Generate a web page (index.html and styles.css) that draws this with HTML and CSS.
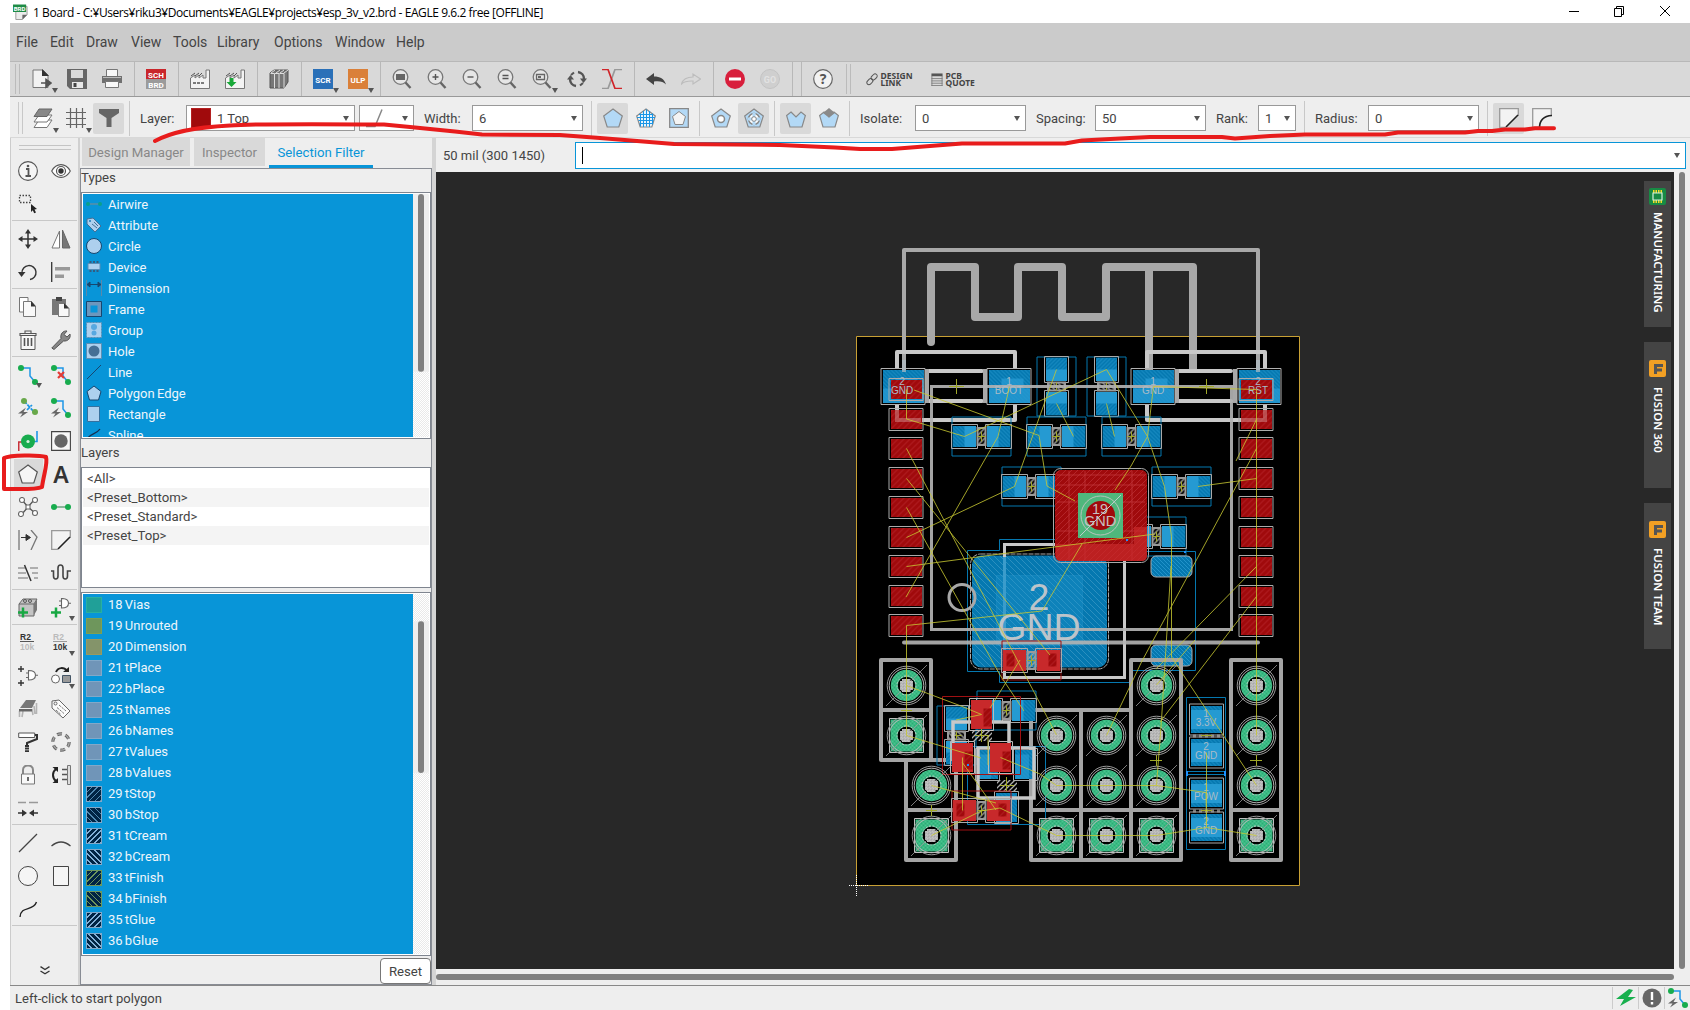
FILE: index.html
```html
<!DOCTYPE html>
<html lang="en">
<head>
<meta charset="utf-8">
<title>1 Board - EAGLE 9.6.2 free</title>
<link rel="stylesheet" href="styles.css">
</head>
<body>
<svg class="defs" width="0" height="0">
<defs>
  <pattern id="hb" width="4" height="4" patternUnits="userSpaceOnUse"><rect width="4" height="4" fill="#0578b0"/><path d="M-1-1l6 6M-1 3l2 2M3-1l2 2" stroke="#2a9bd0" stroke-width=".8"/></pattern>
  <pattern id="hbig" width="6" height="6" patternUnits="userSpaceOnUse"><rect width="6" height="6" fill="#0578b0"/><path d="M-1-1l8 8M-1 5l2 2M5-1l2 2" stroke="#3c9ac6" stroke-width=".7"/></pattern>
  <pattern id="hr" width="6" height="6" patternUnits="userSpaceOnUse"><rect width="6" height="6" fill="#a00a0c"/><path d="M-1 7l8-8M-1 1l2-2M5 7l2-2" stroke="#c03338" stroke-width=".7"/></pattern>
  <pattern id="hg" width="4" height="4" patternUnits="userSpaceOnUse"><rect width="4" height="4" fill="#2cac76"/><path d="M0 4l4-4M0 0l4 4" stroke="#58d09a" stroke-width=".7"/></pattern>
  <pattern id="hw" width="5" height="5" patternUnits="userSpaceOnUse"><path d="M-1 6l7-7M-1 1l2-2M4 6l2-2" stroke="#b0b0b0" stroke-width="1.3"/></pattern>
  <pattern id="noise" width="3" height="3" patternUnits="userSpaceOnUse"><rect width="3" height="3" fill="#c4c4c4"/><path d="M0 0h1v1H0zM2 1h1v1H2z" fill="#8a8a8a"/></pattern>
</defs>
<symbol id="new" viewBox="0 0 20 20"><path d="M1 1h10l5 5v12.500H1z" fill="#f2f2f2" stroke="#777"/><path d="M10 0l7 7h-7z" fill="#333"/><path d="M9 14h7M14 10.500l5 3.500-5 4z" fill="#555" stroke="#555" stroke-width="1.600"/></symbol>
<symbol id="save" viewBox="0 0 20 20"><path d="M0 0h20v20H3l-3-3z" fill="#666"/><path d="M4 1h12v8H4z" fill="#d9d9d9"/><path d="M5 13h11v6H5z" fill="#e8e8e8"/><path d="M6.500 14h3v4h-3z" fill="#444"/></symbol>
<symbol id="print" viewBox="0 0 20 20"><path d="M4.500.5h11V8h-11z" fill="#f8f8f8" stroke="#777"/><path d="M0 7h20v7H0z" fill="#707070"/><path d="M1 8.500h18" stroke="#bbb"/><path d="M3.500 12.500h13v6h-13z" fill="#f8f8f8" stroke="#777"/></symbol>
<symbol id="fab" viewBox="0 0 20 20"><path d="M.5 19.500V9L5 6v3l4-3v3l4-3v3h3V1h3.500v18.500z" fill="#f3f3f3" stroke="#777"/><path d="M1 7l4-3M5 7l4-3M9 7l3-3" stroke="#555"/></symbol>
<symbol id="cam" viewBox="0 0 20 20"><use href="#fab"/><path d="M3 14h12" stroke="#555" stroke-width="1.500" stroke-dasharray="3 1"/></symbol>
<symbol id="camd" viewBox="0 0 20 20"><use href="#fab"/><path d="M4.500 9h4v4h3L6.500 18l-5-5h3z" fill="#18a838"/></symbol>
<symbol id="lib" viewBox="0 0 20 20"><path d="M1 4l4-3h14v12l-4 6H1z" fill="#777" stroke="#555"/><path d="M1.500 4.500h4V19M6 4.500h4V19M10.500 4.500H15V19" fill="none" stroke="#ddd"/><path d="M2 4l4-3M7 4l4-3M11 4l4-3M15 4l4-3" stroke="#ddd"/></symbol>
<symbol id="z" viewBox="0 0 20 20"><circle cx="8.500" cy="8" r="7.300" fill="#e6e6e6" stroke="#777" stroke-width="1.300"/><path d="M13.500 13.500l5 5.500" stroke="#666" stroke-width="2.400"/></symbol>
<symbol id="zf" viewBox="0 0 20 20"><use href="#z"/><path d="M4 5h9v6H4z" fill="#666"/></symbol>
<symbol id="zi" viewBox="0 0 20 20"><use href="#z"/><path d="M5.500 8h6M8.500 5v6" stroke="#555" stroke-width="1.400"/></symbol>
<symbol id="zo" viewBox="0 0 20 20"><use href="#z"/><path d="M5.500 8h6" stroke="#555" stroke-width="1.400"/></symbol>
<symbol id="ze" viewBox="0 0 20 20"><use href="#z"/><path d="M5.500 6.500h6M5.500 9.500h6" stroke="#555" stroke-width="1.300"/></symbol>
<symbol id="zs" viewBox="0 0 20 20"><use href="#z"/><path d="M4.500 5.500h8v5h-8z" fill="none" stroke="#666" stroke-width="1.300"/><path d="M6 7h3v2H6z" fill="#666"/></symbol>
<symbol id="refresh" viewBox="0 0 20 20"><path d="M11 3a7 7 0 0 1 6 7M9 17a7 7 0 0 1-6-7" fill="none" stroke="#555" stroke-width="2.400"/><path d="M13 9.500h7L16.500 14zM0 10.500h7L3.500 6z" fill="#555"/><path d="M7 3.500L4 6M13 16.500l3-2.500" stroke="#555" stroke-width="2"/></symbol>
<symbol id="ratx" viewBox="0 0 20 20"><path d="M0 19.500h6L13 .5h7" fill="none" stroke="#999" stroke-width="1.700"/><path d="M0 .5h6l7 19h7" fill="none" stroke="#d0252a" stroke-width="1.700"/></symbol>
<symbol id="undo" viewBox="0 0 20 20"><path d="M0 10l8-6v3.500c6 0 10 2 12 8-3-3-6-3.500-12-3V16z" fill="#444"/></symbol>
<symbol id="redo" viewBox="0 0 20 20"><path d="M19.500 10L12 5v3C6 8 2 9.500.5 15c3-3 6-3.200 11.500-3v3z" fill="none" stroke="#bdbdbd" stroke-width="1.200"/></symbol>
<symbol id="stop" viewBox="0 0 20 20"><circle cx="10" cy="10" r="10" fill="#d81f3c"/><path d="M4 10h12" stroke="#fff" stroke-width="3"/></symbol>
<symbol id="link" viewBox="0 0 14 14"><g fill="none" stroke="#555" stroke-width="1.200"><rect x="5.500" y="1.500" width="8" height="5" rx="2.500" transform="rotate(-45 9.500 4)"/><rect x=".5" y="7" width="8" height="5" rx="2.500" transform="rotate(-45 4.500 9.500)"/></g></symbol>
<symbol id="quote" viewBox="0 0 12 14"><path d="M0 .5h12v3H0z" fill="#555"/><path d="M0 6h12M0 8.500h12M0 11h12M0 13.500h12M.5 3v11M11.500 3v11" stroke="#777" stroke-width=".9"/></symbol>
<symbol id="layers" viewBox="0 0 20 20"><path d="M6 12h13l-5 7.500H1z" fill="#fff" stroke="#777"/><path d="M6 7h13l-5 7H1z" fill="#fff" stroke="#777"/><path d="M6 1h13l-5 7.500H1z" fill="#888" stroke="#666"/></symbol>
<symbol id="grid" viewBox="0 0 20 20"><path d="M4.500 0v20M10.500 0v20M16.500 0v20M0 4.500h20M0 10.500h20M0 16.500h20" stroke="#666" stroke-width="1.200"/></symbol>
<symbol id="filter" viewBox="0 0 20 20"><path d="M0 1h20v4l-7.500 5v9h-5v-9L0 5z" fill="#666"/></symbol>
<symbol id="penta" viewBox="0 0 20 20"><path d="M10 1l9.300 7-3.500 11H4.200L.7 8z" stroke-width="1.200"/></symbol>
<symbol id="p1" viewBox="0 0 20 20"><use href="#penta" fill="#b3d9f6" stroke="#888"/></symbol>
<symbol id="p2" viewBox="0 0 20 20"><use href="#penta" fill="#fff" stroke="#888"/><path d="M4.500 5.500v13M7.500 3v16M10.500 1.500v17M13.500 3v16M16.500 5.500v11M3 6.500h14M1 9.500h18M2.500 12.500h15M3.500 15.500h13" stroke="#1a96e6" stroke-width="1.200"/></symbol>
<symbol id="p3" viewBox="0 0 20 20"><path d="M.7.700h18.600v18.600H.7z" fill="#b3d9f6" stroke="#888" stroke-width="1.300"/><path d="M10 3.500l6.500 5-2.500 8H6l-2.500-8z" fill="#f4f4f4" stroke="#888"/></symbol>
<symbol id="p4" viewBox="0 0 20 20"><use href="#p1"/><circle cx="10" cy="11" r="3.500" fill="#fff" stroke="#888" stroke-width="1.500"/></symbol>
<symbol id="p5" viewBox="0 0 20 20"><use href="#p1"/><circle cx="10" cy="11" r="5.500" fill="#fff" stroke="#888" stroke-width="1.500"/><path d="M10 5v12M4 11h12" stroke="#b3d9f6" stroke-width="3"/><circle cx="10" cy="11" r="2.300" fill="#fff" stroke="#888"/></symbol>
<symbol id="p6" viewBox="0 0 20 20"><path d="M5 4l5 5 5-5 4.400 3.500L16 19H4L.6 7.500z" fill="#b3d9f6" stroke="#888" stroke-width="1.200"/></symbol>
<symbol id="p7" viewBox="0 0 20 20"><use href="#p6"/><path d="M10 0l6 5-6 4.500L4 5z" fill="#8a8a8a"/></symbol>
<symbol id="miter" viewBox="0 0 20 20"><path d="M.7 19.500V.7h18.600v7L7 19.300z" fill="#f3f3f3"/><path d="M7 19.300H.7V.7h18.600v7" fill="none" stroke="#999" stroke-width="1.300"/><path d="M7 19L19 7" stroke="#222" stroke-width="1.600"/></symbol>
<symbol id="round" viewBox="0 0 20 20"><path d="M.7 19.500V.7h18.600v7c-8 .5-11.500 4-12 11.600z" fill="#f3f3f3"/><path d="M7 19.300H.7V.7h18.600v7" fill="none" stroke="#999" stroke-width="1.300"/><path d="M7.500 20C7.500 12 11 8 20 7.500" fill="none" stroke="#222" stroke-width="1.600"/></symbol>
<symbol id="info" viewBox="0 0 20 20"><circle cx="10" cy="10" r="9.400" fill="#f5f5f5" stroke="#555" stroke-width="1.100"/><path d="M8 8h2.500v7M7.500 15h5.500" fill="none" stroke="#555" stroke-width="1.800"/><circle cx="10" cy="5" r="1.300" fill="#555"/></symbol>
<symbol id="eye" viewBox="0 0 20 20"><path d="M.7 10c4.500-8.500 14-8.500 18.600 0-4.500 8.500-14 8.500-18.600 0z" fill="#fff" stroke="#555" stroke-width="1.100"/><circle cx="10" cy="10" r="4.500" fill="none" stroke="#555" stroke-width="1.200"/><circle cx="10" cy="10" r="2.700" fill="#333"/></symbol>
<symbol id="sel" viewBox="0 0 20 20"><path d="M1.500 1.500h11v7h-11z" fill="none" stroke="#444" stroke-width="1.300" stroke-dasharray="1.500 1.500"/><path d="M13 10l6 5-2.500.5 1.500 3-1.800.8-1.400-3-1.800 1.700z" fill="#222"/></symbol>
<symbol id="move" viewBox="0 0 20 20"><path d="M10 2v16M2 10h16" stroke="#333" stroke-width="1.500"/><path d="M10 0l3 4.500H7zM10 20l3-4.500H7zM0 10l4.500-3v6zM20 10l-4.500-3v6z" fill="#333"/></symbol>
<symbol id="mirror" viewBox="0 0 20 20"><path d="M8.500 2v17H1z" fill="#fff" stroke="#777"/><path d="M11.500 1L19 19h-7.500z" fill="#777" stroke="#666"/></symbol>
<symbol id="rot" viewBox="0 0 20 20"><path d="M4 11a7 7 0 1 1 8 6.500" fill="none" stroke="#333" stroke-width="1.400"/><path d="M0 10h7.500L3.500 15z" fill="#333"/></symbol>
<symbol id="align" viewBox="0 0 20 20"><path d="M.7 0v20" stroke="#333" stroke-width="1.300"/><path d="M4 5h15v3.500H4zM4 12.500h9V16H4z" fill="#999"/></symbol>
<symbol id="copy" viewBox="0 0 20 20"><path d="M1.500.5H10V15H1.500z" fill="#fff" stroke="#777"/><path d="M5.500 4.500h8l4 5v10h-12z" fill="#f8f8f8" stroke="#777"/><path d="M13 4l5 5.500h-5z" fill="#333"/></symbol>
<symbol id="paste" viewBox="0 0 20 20"><path d="M1 2h14v16H1z" fill="#777"/><path d="M5 0h6v4H5z" fill="#444"/><path d="M7.500 6.500h6l4.500 5v8H7.500z" fill="#f8f8f8" stroke="#777"/><path d="M13 6l5 5.500h-5z" fill="#333"/></symbol>
<symbol id="trash" viewBox="0 0 20 20"><path d="M3 5.500h14v14H3z" fill="#f8f8f8" stroke="#555"/><path d="M2 3.500h16v2H2zM7 3V1h6v2" fill="none" stroke="#555" stroke-width="1.100"/><path d="M6.500 8v8M10 8v8M13.500 8v8" stroke="#555" stroke-width="1.600"/></symbol>
<symbol id="wrench" viewBox="0 0 20 20"><path d="M.8 18L10 8.500C9 4 12 .5 16 1l-3 3.500L16 7l3-3c1 4-2 7.500-6.500 7L3 19.500z" fill="#888" stroke="#555"/></symbol>
<symbol id="route" viewBox="0 0 20 20"><path d="M3 3h9v8l5 6" fill="none" stroke="#1e96e6" stroke-width="1.500"/><circle cx="3" cy="3" r="3" fill="#18ac4e"/><circle cx="17" cy="17" r="3" fill="#18ac4e"/></symbol>
<symbol id="rip" viewBox="0 0 20 20"><use href="#route"/><path d="M7 7l6 6M13 7l-6 6" stroke="#e43b35" stroke-width="2.200"/></symbol>
<symbol id="boltg" viewBox="0 0 20 20"><path d="M8 9.500l-8 6h4.500L2 19.500l8-5.500H5.500z" fill="#666"/></symbol>
<symbol id="fan" viewBox="0 0 20 20"><path d="M6 3l11 12M9 12l5-5" stroke="#1e96e6" stroke-width="1.700" stroke-dasharray="4 1"/><circle cx="6" cy="3" r="3" fill="#68a84a"/><circle cx="17" cy="14" r="3" fill="#68a84a"/><use href="#boltg"/></symbol>
<symbol id="auto" viewBox="0 0 20 20"><use href="#route"/><use href="#boltg"/></symbol>
<symbol id="via" viewBox="0 0 20 20"><path d="M.7 20v-9h9" fill="none" stroke="#c8323a" stroke-width="1.600"/><path d="M10 10.500h9V0" fill="none" stroke="#1e96e6" stroke-width="1.600"/><circle cx="10" cy="10.500" r="7" fill="#18ac4e"/><circle cx="10" cy="10.500" r="1.600" fill="#d5f0de"/></symbol>
<symbol id="hole" viewBox="0 0 20 20"><path d="M.6.600h18.800v18.800H.6z" fill="#f8f8f8" stroke="#444" stroke-width="1.100"/><circle cx="10" cy="10" r="6.700" fill="#666"/></symbol>
<symbol id="poly" viewBox="0 0 20 20"><use href="#penta" fill="#f5f5f5" stroke="#555"/></symbol>
<symbol id="net" viewBox="0 0 20 20"><path d="M4 3l6 7 6-7M4 17l6-7 7 6" fill="none" stroke="#555" stroke-width="1.300"/><g fill="#fff" stroke="#666" stroke-width="1.100"><circle cx="4" cy="3" r="2.500"/><circle cx="17" cy="3" r="2.500"/><circle cx="3" cy="17" r="2.500"/><circle cx="17" cy="16" r="2.500"/><path d="M8 8h4v4H8z"/></g></symbol>
<symbol id="wire" viewBox="0 0 20 20"><path d="M3 10h14" stroke="#8ab59a" stroke-width="2"/><circle cx="3" cy="10" r="3" fill="#18ac4e"/><circle cx="17" cy="10" r="3" fill="#18ac4e"/></symbol>
<symbol id="ext" viewBox="0 0 20 20"><path d="M1 0v20M13 0l6 7-6 13" fill="none" stroke="#777" stroke-width="1.300"/><path d="M3 7.500h6M8 4.500l4.500 3-4.500 3z" fill="#333" stroke="#333"/></symbol>
<symbol id="split" viewBox="0 0 20 20"><path d="M0 5h7M12 5h8M0 10h8M14 10h6M0 15h10M16 15h4" stroke="#999" stroke-width="1.500"/><path d="M6.500 2L13 18" stroke="#333" stroke-width="1.500"/></symbol>
<symbol id="meander" viewBox="0 0 20 20"><path d="M0 8h2.500v5c0 4 4.500 4 4.500 0V5c0-4 5-4 5 0v8c0 4 4.500 4 4.500 0V8H20" fill="none" stroke="#444" stroke-width="1.600"/></symbol>
<symbol id="add" viewBox="0 0 20 20"><path d="M1 6l4-5h14l-3 5v12H1z" fill="#c4c4c4" stroke="#666"/><path d="M16 6l3-5v11l-3 5z" fill="#777"/><path d="M1 6h15" stroke="#666"/><g fill="none" stroke="#555"><circle cx="7" cy="3" r="1.500"/><circle cx="12" cy="3" r="1.500"/></g><path d="M5 9.500v10M0 14.500h10" stroke="#18a843" stroke-width="2.500"/></symbol>
<symbol id="gate" viewBox="0 0 20 20"><path d="M10.500 1.500V11c5 0 7-2 7-4.800s-2-4.700-7-4.700zM8 4h2.500M8 8.500h2.500M17.500 6.200H20" fill="#fff" stroke="#666" stroke-width="1.100"/></symbol>
<symbol id="addg" viewBox="0 0 20 20"><use href="#gate" y="-1"/><path d="M5 9.500v10M0 14.500h10" stroke="#18a843" stroke-width="2.500"/></symbol>
<symbol id="inv" viewBox="0 0 20 20"><use href="#gate" y="3"/><path d="M0 3h6M3 0v6M0 17h6M3 14v6" stroke="#333" stroke-width="1.400"/></symbol>
<symbol id="repl" viewBox="0 0 20 20"><path d="M5 6c2-5 8-5 11-1" fill="none" stroke="#222" stroke-width="2"/><path d="M12 6h6V1z" fill="#222"/><circle cx="4.500" cy="13" r="4" fill="#fff" stroke="#666"/><path d="M11.500 9.500h8v7h-8z" fill="#999" stroke="#456"/></symbol>
<symbol id="chip" viewBox="0 0 20 20"><path d="M1.500 12v6M5 12l-1 6M14 10l1 6M16 7l1 8M18.500 4v11" stroke="#b4b4b4" stroke-width="1.600"/><path d="M2 9l6-8h10l-4 8z" fill="#777"/><path d="M1 10h13v2.500H1z" fill="#666"/></symbol>
<symbol id="tag" viewBox="0 0 20 20"><path d="M1 2l7-1 11 11-7 7L1 9z" fill="#fbfbfb" stroke="#666"/><circle cx="4.500" cy="4.500" r="1.500" fill="none" stroke="#666"/><path d="M8 6l7 6M6 8.500l7 6M5 11l5 4.500" stroke="#777" stroke-dasharray="2.500 1"/></symbol>
<symbol id="paint" viewBox="0 0 20 20"><path d="M.7 1h16v4.500H.7z" fill="#fff" stroke="#555"/><path d="M17 3h2v4L9 11v3" fill="none" stroke="#333" stroke-width="2"/><path d="M9 13v7" stroke="#333" stroke-width="4" stroke-dasharray="2 .6"/></symbol>
<symbol id="ring" viewBox="0 0 20 20"><circle cx="10" cy="10" r="8.200" fill="none" stroke="#666" stroke-width="3.200" stroke-dasharray="5 3.600"/><circle cx="10" cy="10" r="8.200" fill="none" stroke="#aaa" stroke-width="1.300" stroke-dasharray="5 3.600"/></symbol>
<symbol id="lock" viewBox="0 0 20 20"><path d="M5 9V5c0-6 10-6 10 0v4" fill="none" stroke="#888" stroke-width="2"/><path d="M3.500 9h13v10h-13z" fill="#f8f8f8" stroke="#777"/><path d="M10 12v4" stroke="#444" stroke-width="1.600"/></symbol>
<symbol id="pinsw" viewBox="0 0 20 20"><path d="M5 4c-4 3-4 9 0 12" fill="none" stroke="#222" stroke-width="2"/><path d="M1.500 2H7v5zM1.500 18H7v-5z" fill="#222"/><path d="M11 4.500h6M11 9.500h6M11 14.500h6" stroke="#555" stroke-width="1.400"/><path d="M16.500.5h3v19h-3z" fill="#ddd" stroke="#777"/></symbol>
<symbol id="slice" viewBox="0 0 20 20"><path d="M0 4.500h8M11 4.500h9" stroke="#999" stroke-width="1.700"/><path d="M0 15h6M14 15h6" stroke="#333" stroke-width="1.600"/><path d="M4 11.500L9 15l-5 3.500zM16 11.500L11 15l5 3.500z" fill="#333"/></symbol>
<symbol id="line" viewBox="0 0 20 20"><path d="M1 19L19 1" stroke="#444" stroke-width="1.200"/></symbol>
<symbol id="arc" viewBox="0 0 20 20"><path d="M.5 13c6-5 13-5 19 0" fill="none" stroke="#444" stroke-width="1.300"/></symbol>
<symbol id="circ" viewBox="0 0 20 20"><circle cx="10" cy="10" r="9.500" fill="#f5f5f5" stroke="#444"/></symbol>
<symbol id="rect" viewBox="0 0 20 20"><path d="M2.500.5h15v19h-15z" fill="#f5f5f5" stroke="#444"/></symbol>
<symbol id="spl" viewBox="0 0 20 20"><path d="M2 18c1-12 13-5 16.500-15" fill="none" stroke="#222" stroke-width="1.400"/></symbol>
<symbol id="resistor" overflow="visible"><path d="M-29.500-19.500h59v39h-59z" fill="none" stroke="#0578b0"/><path d="M-30-12h26v24h-26zM4-12h26v24H4z" fill="none" stroke="#aaa"/><path d="M-4-8.500h8v17h-8z" fill="url(#hw)" stroke="#999" stroke-width="2"/><path d="M-28.500-10.500h23v21h-23zM5.500-10.500h23v21h-23z" fill="url(#hb)"/><path d="M-17-10.500h11.500v21H-17zM5.500-10.500H17v21H5.500z" fill="#259ad2"/><path d="M-4 0h8M0-5V5" stroke="#a0a828"/></symbol>
<symbol id="resred" overflow="visible"><path d="M-29.500-19.500h59v39h-59z" fill="none" stroke="#9c1012"/><path d="M-30-12h26v24h-26zM4-12h26v24H4z" fill="none" stroke="#aaa"/><path d="M-4-8.500h8v17h-8z" fill="url(#hw)" stroke="#999" stroke-width="2"/><path d="M-28.500-10.500h23v21h-23zM5.500-10.500h23v21h-23z" fill="#c8292b"/><path d="M-25-7h8v13h-8zM17-7h8v13h-8z" fill="url(#hr)"/><path d="M-4 0h8M0-5V5" stroke="#a0a828"/></symbol>
<symbol id="rpad" overflow="visible"><path d="M-17.500-11h34v22h-34z" fill="none" stroke="#aaa"/><path d="M-15.500-9.500h31v19h-31z" fill="url(#hr)"/></symbol>
<symbol id="bpad" overflow="visible"><path d="M-22.500-18h44v36h-44z" fill="none" stroke="#b0b0b0"/><path d="M-20.500-16.500h41v33h-41z" fill="url(#hb)"/><path d="M-20.500 2h41v14.500h-41zM-8-8H14V4H-8z" fill="#259ad2" opacity=".8"/></symbol>
<symbol id="thring" overflow="visible"><circle r="17.300" fill="none" stroke="#b8b8b8"/><circle r="19.300" fill="none" stroke="#999"/><circle r="9.500" fill="none" stroke="#ccc" stroke-dasharray="2 1.500"/><path d="M-20.500 20.500L20.500-20.500" stroke="#999" stroke-width=".8"/><path d="M-4.500-6.500H4v2h2.500v9H4v2h-8.500v-2h-2v-9h2z" fill="url(#noise)"/></symbol>
<symbol id="th" overflow="visible"><circle r="12.200" fill="none" stroke="url(#hg)" stroke-width="7"/><use href="#thring"/></symbol>
<symbol id="sq" overflow="visible"><path d="M-17-17h34v34h-34z" fill="#000" stroke="#c0c0c0"/><path d="M-16-16h32v32h-32z" fill="url(#hg)"/><circle r="9" fill="#000"/><use href="#thring"/></symbol>
<symbol id="sotb" overflow="visible"><path d="M-12-16h24v32h-24z" fill="none" stroke="#aaa"/><path d="M-10.500-14.500h21v29h-21z" fill="url(#hb)"/><path d="M-10.500-10h14v24.500h-14z" fill="#259ad2" opacity=".7"/></symbol>
<symbol id="sotr" overflow="visible"><path d="M-12-16h24v32h-24z" fill="none" stroke="#bbb"/><path d="M-10.500-14.500h21v29h-21z" fill="#c8292b"/><path d="M2-6h8v18H2z" fill="url(#hr)"/></symbol>
<symbol id="jpad" overflow="visible"><path d="M-17-15.500h34v31h-34z" fill="none" stroke="#aaa"/><path d="M-15.500-13.500h31v27h-31z" fill="#259ad2"/><path d="M-15.500-13.500h31v4h-31zM-15.500 9.500h31v4h-31z" fill="url(#hb)"/></symbol>
</svg>

<div class="window">
  <header class="title">
    <svg class="appicon" viewBox="0 0 16 18"><path d="M3 3h12v9l-5 5H3z" fill="#ececec" stroke="#999"/><path d="M10 17v-5h5z" fill="#666"/><path d="M0 1h14v8H0z" fill="#1e8c46"/><text x="7" y="7.500" class="ib brd">BRD</text></svg>
    <span>1 Board - C:¥Users¥riku3¥Documents¥EAGLE¥projects¥esp_3v_v2.brd - EAGLE 9.6.2 free [OFFLINE]</span>
    <svg class="winbtns" width="102" height="12" viewBox="0 0 102 12" fill="none" stroke="#000"><path d="M0 6.500h10M45.500 3.500h7v8h-7zM47.500 3V1.500h7v8H53M91 1l10 10M101 1L91 11"/></svg>
  </header>
  <nav class="menu"><span class="m1">File</span><span class="m2">Edit</span><span class="m3">Draw</span><span class="m4">View</span><span class="m5">Tools</span><span class="m6">Library</span><span class="m7">Options</span><span class="m8">Window</span><span>Help</span></nav>
  <div class="bar">
    <i class="grip"></i>
    <b class="t dd"><svg><use href="#new"/></svg></b><b class="t"><svg><use href="#save"/></svg></b><b class="t"><svg><use href="#print"/></svg></b><i class="s"></i>
    <b class="t"><svg viewBox="0 0 20 20"><path d="M0 0h20v10H0z" fill="#c9262b"/><path d="M0 10h20v10H0z" fill="#9b9b9b"/><text x="10" y="8.500" class="ib">SCH</text><text x="10" y="18.500" class="ib">BRD</text></svg></b><i class="s"></i>
    <b class="t"><svg><use href="#cam"/></svg></b><b class="t"><svg><use href="#camd"/></svg></b><i class="s"></i>
    <b class="t"><svg><use href="#lib"/></svg></b><i class="s"></i>
    <b class="t dd"><svg viewBox="0 0 20 20"><path d="M0 0h20v20H0z" fill="#2a70b8"/><text x="10" y="13.500" class="ib">SCR</text></svg></b><b class="t dd"><svg viewBox="0 0 20 20"><path d="M0 0h20v20H0z" fill="#da8039"/><text x="10" y="13.500" class="ib">ULP</text></svg></b><i class="s"></i>
    <b class="t"><svg><use href="#zf"/></svg></b><b class="t"><svg><use href="#zi"/></svg></b><b class="t"><svg><use href="#zo"/></svg></b><b class="t"><svg><use href="#ze"/></svg></b><b class="t dd"><svg><use href="#zs"/></svg></b><b class="t"><svg><use href="#refresh"/></svg></b><b class="t"><svg><use href="#ratx"/></svg></b><i class="s"></i>
    <b class="t"><svg><use href="#undo"/></svg></b><b class="t"><svg><use href="#redo"/></svg></b><i class="s"></i>
    <b class="t"><svg><use href="#stop"/></svg></b><b class="t"><svg viewBox="0 0 20 20"><circle cx="10" cy="10" r="9.500" fill="#cfcfcf" stroke="#c3c3c3"/><text x="10" y="13.500" class="ib go">GO</text></svg></b><i class="s"></i><i class="s"></i>
    <b class="t"><svg viewBox="0 0 20 20"><circle cx="10" cy="10" r="9.300" fill="#f2f2f2" stroke="#666" stroke-width="1.200"/><text x="10" y="15" class="q">?</text></svg></b><i class="grip g2"></i>
    <span class="act"><svg width="12" height="13"><use href="#link"/></svg><span>DESIGN<br>LINK</span></span>
    <span class="act a2"><svg width="12" height="13"><use href="#quote"/></svg><span>PCB<br>QUOTE</span></span>
  </div>
  <div class="opts">
    <i class="grip"></i>
    <b class="o dd"><svg><use href="#layers"/></svg></b><b class="o dd"><svg><use href="#grid"/></svg></b><b class="o on"><svg><use href="#filter"/></svg></b><i class="s"></i>
    <label class="w51">Layer:</label><div class="combo c168"><i class="sw"></i>1 Top</div><div class="combo c55"><svg width="24" height="20"><path d="M0 18.500h9L16 1.500" fill="none" stroke="#888" stroke-width="1.500"/></svg></div>
    <label class="w54">Width:</label><div class="combo">6</div><i class="s"></i>
    <b class="o on"><svg><use href="#p1"/></svg></b><b class="o"><svg><use href="#p2"/></svg></b><b class="o"><svg><use href="#p3"/></svg></b><i class="s"></i>
    <b class="o"><svg><use href="#p4"/></svg></b><b class="o on"><svg><use href="#p5"/></svg></b><i class="s"></i>
    <b class="o on"><svg><use href="#p6"/></svg></b><b class="o"><svg><use href="#p7"/></svg></b><i class="s"></i>
    <label class="w61">Isolate:</label><div class="combo">0</div><label class="w65">Spacing:</label><div class="combo">50</div><label class="w48">Rank:</label><div class="combo c38">1</div><i class="s"></i>
    <label class="w59">Radius:</label><div class="combo">0</div><i class="s"></i>
    <b class="o on"><svg><use href="#miter"/></svg></b><b class="o"><svg><use href="#round"/></svg></b>
  </div>
  <main>
    <aside class="palette">
      <i class="hgrip"></i>
      <b><svg><use href="#info"/></svg></b><b><svg><use href="#eye"/></svg></b><b><svg><use href="#sel"/></svg></b><b></b><hr>
      <b><svg><use href="#move"/></svg></b><b><svg><use href="#mirror"/></svg></b><b><svg><use href="#rot"/></svg></b><b><svg><use href="#align"/></svg></b><hr>
      <b><svg><use href="#copy"/></svg></b><b><svg><use href="#paste"/></svg></b><b><svg><use href="#trash"/></svg></b><b><svg><use href="#wrench"/></svg></b><hr>
      <b class="dd"><svg><use href="#route"/></svg></b><b><svg><use href="#rip"/></svg></b><b><svg><use href="#fan"/></svg></b><b><svg><use href="#auto"/></svg></b><b><svg><use href="#via"/></svg></b><b><svg><use href="#hole"/></svg></b>
      <b class="on"><svg><use href="#poly"/></svg></b><b><svg viewBox="0 0 20 20"><text x="10" y="18.500" class="bigA">A</text></svg></b><b><svg><use href="#net"/></svg></b><b><svg><use href="#wire"/></svg></b><b><svg><use href="#ext"/></svg></b><b><svg><use href="#miter"/></svg></b><b><svg><use href="#split"/></svg></b><b><svg><use href="#meander"/></svg></b><hr>
      <b><svg><use href="#add"/></svg></b><b class="dd"><svg><use href="#addg"/></svg></b><hr>
      <b><svg viewBox="0 0 20 20"><text x="2" y="6.500" class="rt">R2</text><path d="M2 8.500h14" stroke="#555"/><text x="2" y="17" class="rt dim">10k</text></svg></b><b class="dd"><svg viewBox="0 0 20 20"><text x="2" y="6.500" class="rt dim">R2</text><path d="M2 8.500h14" stroke="#999"/><text x="2" y="17" class="rt">10k</text></svg></b><b><svg><use href="#inv"/></svg></b><b class="dd"><svg><use href="#repl"/></svg></b><b><svg><use href="#chip"/></svg></b><b><svg><use href="#tag"/></svg></b><b><svg><use href="#paint"/></svg></b><b><svg><use href="#ring"/></svg></b><b><svg><use href="#lock"/></svg></b><b><svg><use href="#pinsw"/></svg></b><b><svg><use href="#slice"/></svg></b><b></b><hr>
      <b><svg><use href="#line"/></svg></b><b><svg><use href="#arc"/></svg></b><b><svg><use href="#circ"/></svg></b><b><svg><use href="#rect"/></svg></b><b><svg><use href="#spl"/></svg></b><b></b><hr>
      <svg class="more" width="10" height="9" fill="none" stroke="#333" stroke-width="1.400"><path d="M.5.700L5 3.500 9.500.700M.5 5L5 7.800 9.500 5"/></svg>
    </aside>
    <section class="panel">
      <div class="tabs"><span class="tab1">Design Manager</span><span class="tab2">Inspector</span><span class="tab3">Selection Filter</span></div>
      <div class="box">
        <h4 class="h1">Types</h4>
        <div class="list l1"><ul class="blue">
          <li><svg viewBox="0 0 16 16"><path d="M2 8h12" stroke="#5b8fa5" stroke-width="1.500"/><circle cx="2" cy="8" r="2" fill="#0aa08c"/><circle cx="14" cy="8" r="2" fill="#0aa08c"/></svg>Airwire</li>
          <li><svg viewBox="0 0 16 16"><path d="M1 2l6-1 8 8-6 6-8-8z" fill="#add0ee" stroke="#456f95"/><circle cx="4" cy="4" r="1" fill="#1879b8"/><path d="M6 7l5 4M8 5l4 4" stroke="#456f95"/></svg>Attribute</li>
          <li><svg viewBox="0 0 16 16"><circle cx="8" cy="8" r="7.500" fill="#add0ee" stroke="#17466f"/></svg>Circle</li>
          <li><svg viewBox="0 0 16 16"><path d="M4.500 2v11M8 2v11M11.500 2v11" stroke="#345c80" stroke-width="2"/><path d="M2 4.500h12v6H2z" fill="#add0ee" stroke="#588eb8"/></svg>Device</li>
          <li><svg viewBox="0 0 16 16"><path d="M.5 0v16M15.500 0v16" stroke="#5a88aa"/><path d="M2 4.500h12M1 4.500l3-2.500v5zM15 4.500L12 2v5z" fill="#17466f" stroke="#17466f"/></svg>Dimension</li>
          <li><svg viewBox="0 0 16 16"><path d="M2.500 2.500h11v11h-11z" fill="none" stroke="#6d97bd" stroke-width="4"/><path d="M.5.500h15v15H.5z" fill="none" stroke="#17466f"/></svg>Frame</li>
          <li><svg viewBox="0 0 16 16"><path d="M.5.500h15v15H.5z" fill="#add0ee" stroke="#5b8fb5" stroke-dasharray="2 1"/><circle cx="8" cy="5" r="3" fill="#58a8e0"/><circle cx="8" cy="11" r="2.500" fill="#58a8e0"/></svg>Group</li>
          <li><svg viewBox="0 0 16 16"><path d="M.5.500h15v15H.5z" fill="#add0ee" stroke="#5b8fb5"/><circle cx="8" cy="8" r="5.500" fill="#456f95"/></svg>Hole</li>
          <li><svg viewBox="0 0 16 16"><path d="M1 15L15 1" stroke="#17466f"/></svg>Line</li>
          <li><svg viewBox="0 0 16 16"><path d="M8 1l7 5.500-2.500 8.500h-9L1 6.500z" fill="#add0ee" stroke="#17466f"/></svg>Polygon Edge</li>
          <li><svg viewBox="0 0 16 16"><path d="M1.500.5h12v15h-12z" fill="#add0ee" stroke="#35719f"/></svg>Rectangle</li>
          <li><svg viewBox="0 0 16 16"><path d="M1 13c2-7 9-5 13-11" fill="none" stroke="#17304f" stroke-width="1.300"/></svg>Spline</li>
        </ul><div class="sb"><i class="th1"></i></div></div>
        <h4 class="h2">Layers</h4>
        <div class="list l2"><ul><li>&lt;All&gt;</li><li>&lt;Preset_Bottom&gt;</li><li>&lt;Preset_Standard&gt;</li><li>&lt;Preset_Top&gt;</li></ul></div>
        <div class="list l3"><ul class="blue">
          <li><i class="c via"></i>18 Vias</li><li><i class="c unr"></i>19 Unrouted</li><li><i class="c dim"></i>20 Dimension</li><li><i class="c"></i>21 tPlace</li><li><i class="c"></i>22 bPlace</li><li><i class="c"></i>25 tNames</li><li><i class="c"></i>26 bNames</li><li><i class="c"></i>27 tValues</li><li><i class="c"></i>28 bValues</li><li><i class="c ht"></i>29 tStop</li><li><i class="c hbk"></i>30 bStop</li><li><i class="c ht wide"></i>31 tCream</li><li><i class="c hbk wide"></i>32 bCream</li><li><i class="c ht grn"></i>33 tFinish</li><li><i class="c hbk grn"></i>34 bFinish</li><li><i class="c ht wide"></i>35 tGlue</li><li><i class="c hbk wide"></i>36 bGlue</li>
        </ul><div class="sb"><i class="th2"></i></div></div>
        <button class="reset">Reset</button>
      </div>
    </section>
    <section class="work">
      <div class="cmd"><span>50 mil (300 1450)</span><div class="input"><i class="caret"></i></div></div>
      <div class="view">
        <div class="canvas">
          <svg class="board" width="1238" height="797" viewBox="436 172 1238 797">
            <path d="M856.500 336.500h443v549h-443z" fill="#000" stroke="#c8a034"/>
            <g fill="none" stroke="#a8a8a8" stroke-linecap="round" stroke-linejoin="round">
              <path d="M904 371V250h354v121" stroke-width="4"/>
              <path d="M931 342V267h44v50h43v-50h44v50h44v-50h87v103M1149 267v103" stroke-width="8" stroke-linecap="butt"/><path d="M931 340v2" stroke-width="8"/>
              <path d="M929 371h53M929 401h53M1178 371h53M1178 401h53" stroke="#c8c8c8" stroke-width="4"/>
              <path d="M985 369v34M927 369v34M1235 369v34M1177 369v34" stroke-width="4" stroke-linecap="butt"/>
              <path d="M897 368v-16h118v16M897 404v16h118v-16M1147 368v-16h118v16M1147 404v16h118v-16" stroke="#c8c8c8" stroke-width="4" stroke-linecap="butt"/>
            </g>
            <use href="#bpad" x="903.500" y="386.500"/><use href="#bpad" x="1009.500" y="386.500"/><use href="#bpad" x="1153.500" y="386.500"/><use href="#bpad" x="1259.500" y="386.500"/>
            <path d="M904 360v12M1258 360v12" fill="none" stroke="#b0bcc4" stroke-width="4" opacity=".7"/>
            <g><use href="#resistor" transform="translate(1056.500 386.500) rotate(90)"/><use href="#resistor" transform="translate(1106.500 386.500) rotate(90)"/>
              <use href="#resistor" x="981.500" y="436.500"/><use href="#resistor" x="1056.500" y="436.500"/><use href="#resistor" x="1131.500" y="436.500"/><use href="#resistor" x="1031.500" y="486.500"/><use href="#resistor" x="1181.500" y="486.500"/><use href="#resistor" x="1156.500" y="536.500"/></g>
            <g><use href="#rpad" x="906.500" y="389.500"/><use href="#rpad" x="906.500" y="419.500"/><use href="#rpad" x="906.500" y="448.500"/><use href="#rpad" x="906.500" y="478.500"/><use href="#rpad" x="906.500" y="507.500"/><use href="#rpad" x="906.500" y="537.500"/><use href="#rpad" x="906.500" y="566.500"/><use href="#rpad" x="906.500" y="596.500"/><use href="#rpad" x="906.500" y="625.500"/>
              <use href="#rpad" x="1256.500" y="389.500"/><use href="#rpad" x="1256.500" y="419.500"/><use href="#rpad" x="1256.500" y="448.500"/><use href="#rpad" x="1256.500" y="478.500"/><use href="#rpad" x="1256.500" y="507.500"/><use href="#rpad" x="1256.500" y="537.500"/><use href="#rpad" x="1256.500" y="566.500"/><use href="#rpad" x="1256.500" y="596.500"/><use href="#rpad" x="1256.500" y="625.500"/></g>
            <path d="M897 410v10h24M1265 410v10h-24" fill="none" stroke="#d8a0a0" stroke-width="4" opacity=".45"/>
            <path d="M967.500 671.500v-121h32v-11h130v12h66v119h-66v12h-130v-11z" fill="none" stroke="#0578b0"/>
            <rect x="970.500" y="554" width="138" height="115" rx="10" fill="none" stroke="#aaa" stroke-dasharray="5 1"/>
            <rect x="972" y="555.500" width="135" height="112" rx="9" fill="url(#hbig)"/>
            <path d="M996.500 575.500h86v70h-86z" fill="#259ad2" opacity=".3" stroke="#35a5dc"/>
            <g fill="url(#hb)" stroke="#aaa"><rect x="1151" y="556" width="41" height="21" rx="5"/><rect x="1151" y="645" width="41" height="21" rx="5"/></g>
            <path d="M1004.500 677.500v-133h120v133z" fill="none" stroke="#c8c8c8" stroke-width="3"/>
            <path d="M1004.500 557v110" stroke="#3b9ccb" stroke-width="3"/>
            <circle cx="962" cy="597.500" r="13" fill="none" stroke="#a8a8a8" stroke-width="3"/>
            <path d="M931.500 386.500h300v243h-300z" fill="none" stroke="#b0b0b0" stroke-width="3" opacity=".93"/>
            <path d="M904 642.500h354" stroke="#b4b4b4" stroke-width="4" stroke-linecap="round" opacity=".9"/>
            <g class="net" text-anchor="middle" font-size="37.500" fill="#bcc4ca"><text x="1039" y="610">2</text><text x="1039" y="640">GND</text></g>
            <use href="#resred" x="1031.500" y="660.500"/>
            <rect x="1053.500" y="468.500" width="95" height="94" rx="7" fill="none" stroke="#aaa"/>
            <rect x="1055" y="470" width="92" height="91" rx="6" fill="#a00a0c"/><rect x="1055" y="470" width="92" height="91" rx="6" fill="url(#hr)" opacity=".92"/>
            <path d="M1057 475h88M1057 485h88M1057 502h88M1057 531h88M1069 471v89M1085 471v89M1132 471v89" stroke="#c2353a" stroke-width=".8"/>
            <path d="M1056 544h78v-17h13v29q0 5-5 5h-82q-4 0-4-5z" fill="#c8292b" opacity=".7"/>
            <path d="M1078 493h45v45h-45z" fill="#4fb77c"/><circle cx="1100.500" cy="515.500" r="14.500" fill="#a00a0c"/><circle cx="1100.500" cy="515.500" r="19.500" fill="none" stroke="#b8c4bc"/><path d="M1080 536l41-41" stroke="#bcc"/>
            <g class="net" text-anchor="middle" font-size="14.500" fill="#c8c0c0"><text x="1100" y="513.500">19</text><text x="1100" y="526">GND</text></g>
            <g fill="none" stroke="#a4a4a4" stroke-width="4" stroke-linejoin="round">
              <path d="M881 660h50v100h-50zM881 710h50M906 760h50v100h-50zM906 810h50M1031 710h100v-50h50v200h-150zM1131 710v150M1081 710v150M1031 810h150M1231 660h50v200h-50zM1231 810h50"/></g>
            <g><path d="M967.500 746.500h78v78h-78z" fill="none" stroke="#0578b0"/>
              <use href="#resistor" x="1006.500" y="710.500"/><use href="#resistor" transform="translate(956.500 735.500) rotate(90)"/>
              <use href="#sotb" x="987.500" y="764.500"/><use href="#sotb" x="1025.500" y="764.500"/><use href="#sotb" x="1006.500" y="807.500"/>
              <path d="M972 730h20v11h-20zM997 780h20v11h-20z" fill="url(#hw)"/>
              <path d="M953 761v-39h56v39M978 748v50h56v-50z" fill="none" stroke="#c8c8c8" stroke-width="3.500"/>
              <path d="M942.500 696.500h78v78h-78z" fill="none" stroke="#a01012"/>
              <use href="#sotr" x="981.500" y="714.500"/><use href="#sotr" x="962.500" y="757.500"/><use href="#sotr" x="1000.500" y="757.500"/>
              <use href="#resred" x="981.500" y="810.500"/></g>
            <path d="M1186.500 697.500h39v74h-39zM1186.500 774.500h39v75h-39z" fill="none" stroke="#0578b0"/>
            <path d="M1193 736h27M1193 811h27" stroke="#777" stroke-width="3" stroke-dasharray="3 3"/>
            <use href="#jpad" x="1206.500" y="719.500"/><use href="#jpad" x="1206.500" y="752.500"/><use href="#jpad" x="1206.500" y="793.500"/><use href="#jpad" x="1206.500" y="827.500"/>
            <g><use href="#th" x="906.500" y="685.500"/><use href="#sq" x="906.500" y="735.500"/><use href="#th" x="931.500" y="785.500"/><use href="#sq" x="931.500" y="835.500"/>
              <use href="#th" x="1156.500" y="685.500"/><use href="#th" x="1056.500" y="735.500"/><use href="#th" x="1106.500" y="735.500"/><use href="#th" x="1156.500" y="735.500"/>
              <use href="#th" x="1056.500" y="785.500"/><use href="#th" x="1106.500" y="785.500"/><use href="#th" x="1156.500" y="785.500"/>
              <use href="#sq" x="1056.500" y="835.500"/><use href="#sq" x="1106.500" y="835.500"/><use href="#sq" x="1156.500" y="835.500"/>
              <use href="#th" x="1256.500" y="685.500"/><use href="#th" x="1256.500" y="735.500"/><use href="#th" x="1256.500" y="785.500"/><use href="#sq" x="1256.500" y="835.500"/></g>
            <g class="net" text-anchor="middle" font-size="10" fill="#a9bcc8">
              <text x="902" y="385">2</text><text x="902" y="394">GND</text><text x="1009" y="385">1</text><text x="1009" y="394">BOOT</text><text x="1153" y="385">1</text><text x="1153" y="394">GND</text><text x="1258" y="385">2</text><text x="1258" y="394">RST</text>
              <text x="1206" y="717">1</text><text x="1206" y="726">3.3V</text><text x="1206" y="750">2</text><text x="1206" y="759">GND</text><text x="1206" y="791">1</text><text x="1206" y="800">POW</text><text x="1206" y="825">2</text><text x="1206" y="834">GND</text></g>
            <g fill="none" stroke="#a0a828"><path d="M949 386.500h15M956.500 379v15M1199 386.500h15M1206.500 379v15M901 710.500h11M926 810.500h11M931.500 805v11M1150 760.500h12M1156.500 755v11M1250 760.500h12M1256.500 755v11M975 735.500h14M981.500 729v13M1000 785.500h14M1006.500 777v14M1201 735.500h11M1201 810.500h11"/></g>
            <g fill="none" stroke="#c8c832" stroke-width=".9" opacity=".9">
              <path d="M906.500 389.500V419L964.500 436.500 1106.500 369.500 1147.500 436.500 1131 466 1115 490M914 390L1039 435.500 1047 486 1075 501"/>
              <path d="M1009.500 386.500L998 436.500 906 597M1056.500 369.500L1014.500 486.500 906.500 537.500M1056.500 403.500L1073.500 436.500M1106.500 403.500L1114.500 436.500M1153.500 386.500L1147.500 436.500 1164.500 486.500 1171.500 536.500M1153.500 386.500L1256.500 389.500V685"/>
              <path d="M906.500 448.500L1056.500 735M906.500 478.500L1050 655M906.500 507.500L1000 675 1024 711M906.500 566.500L1000 554 1155 534M906.500 625.500L1042 611 1082 544M906.500 625.500V735.500L981 758"/>
              <path d="M1256.500 448.500L1142 661 1106.500 735.500M1256.500 419.500L1236 461M1198 486.500L1256.500 478.500M1256.500 566.500L1156 669M1256.500 596.500L1160 722M1171.500 536.500V657L1256.500 785.500M1171 566L1161.500 720 1156.500 785.500M1195 640L1156.500 685"/>
              <path d="M906.500 685.500L961 706 981.500 714.500M1020 660L990 708M981.500 714.500L956 720M962.500 757.500V810.500M962 762l34 48M1000.500 757.500L1040 774 1056.500 785.500H1156.500L1206 792.500 1206.500 827.500M931.500 785.500L996 803M931.500 835.500L981 811 1000 808 1056.500 835.500H1156.500L1206.500 827.500 1256.500 835.500M1206.500 752.500V827M1256.500 685.500v50M988 735v30"/></g>
            <path d="M1126 539h2v2h-2zM1184 551h2v2h-2zM967 764h2v2h-2zM1186 771h2v5h-2zM1224 771h2v5h-2z" fill="#1e90ff"/>
            <path d="M849 885.500h19M856.500 875v21" stroke="#fff" stroke-dasharray="1 1"/>
          </svg>
          <div class="side">
            <div><svg viewBox="0 0 17 17"><rect width="17" height="17" rx="2" fill="#188a44"/><path d="M4 3.500h9M4 13.500h9" stroke="#f4dc28" stroke-width="3" stroke-dasharray="1.500 1"/><path d="M4 5h9v7H4z" fill="#188a44" stroke="#d4f0dc" stroke-width="1.200"/></svg><span class="mf">MANUFACTURING</span></div>
            <div><svg viewBox="0 0 17 17"><rect width="17" height="17" rx="2" fill="#f2a024"/><path d="M5 4h9v3H8v1.500h5v3H8V14H5z" fill="#555"/></svg><span>FUSION 360</span></div>
            <div><svg viewBox="0 0 17 17"><rect width="17" height="17" rx="2" fill="#f2a024"/><path d="M5 4h9v3H8v1.500h5v3H8V14H5z" fill="#555"/></svg><span class="ft">FUSION TEAM</span></div>
          </div>
        </div>
        <i class="vs"></i>
      </div>
      <i class="hs"></i>
    </section>
  </main>
  <footer><span>Left-click to start polygon</span><b><svg><path d="M13 1L0 11h8l-4 7 16-9h-8l5-7z" fill="#18b04e"/></svg></b><b><svg><circle cx="10" cy="10" r="9.500" fill="#666"/><path d="M10 4v8M10 14v2.500" stroke="#fff" stroke-width="2.400"/></svg></b><b><svg><use href="#auto"/></svg></b></footer>
</div>
<svg class="ink" width="1690" height="1010" fill="none" stroke="#e81c1c" stroke-width="4" stroke-linecap="round" stroke-linejoin="round"><path d="M155 141C170 133 190 127.500 230 125.500 260 123.500 320 124 384 124.500L410 127 455 131.500 482 134.500 560 135 600 138 674 144 780 145 835 147.500 860 149H892L930 146 962 143.500H1065L1082 140.500 1120 138.500 1150 137H1222L1235 138.500 1270 136 1305 134.500H1385L1398 132.500H1465L1478 131H1492L1505 129.500H1525L1535 128.300H1554"/><path d="M4 488.500V458c6-3 35-3.500 42-1 2 6-2 16-4 30-6 3-20 2-38 2"/></svg>
</body>
</html>
```
FILE: styles.css
```css
* { box-sizing: border-box; }
body { margin: 0; width: 1690px; height: 1010px; overflow: hidden; background: #fff; font: 13px Roboto, sans-serif; color: #444; position: relative; }
.defs { position: absolute; }
.ib { font: bold 8px Roboto, sans-serif; fill: #fff; text-anchor: middle; }
.brd { font-size: 6.500px; }
.go { fill: #e2e2e2; font-size: 9px; }
.q { font: bold 14px "Noto Sans", sans-serif; fill: #555; text-anchor: middle; }
.bigA { font: 600 23px "Noto Sans", sans-serif; fill: #333; text-anchor: middle; }
.rt { font: bold 8.500px "Liberation Sans", sans-serif; fill: #333; }
.rt.dim { fill: #bbb; }
.net { font-family: "Liberation Sans", sans-serif; }
.window { margin-left: 10px; width: 1680px; height: 1010px; display: flex; flex-direction: column; background: #eee; }
.title { height: 23px; background: #fff; display: flex; align-items: center; padding-left: 3px; color: #000; font: 12px "Open Sans", sans-serif; letter-spacing: -.43px; }
.title svg { letter-spacing: 0; }
.title span { flex: 1; margin-left: 5px; padding-top: 1px; white-space: nowrap; }
.appicon { width: 15px; height: 18px; }
.winbtns { margin: 0 19px 2px 0; }
.menu { height: 39px; background: #cbcbcb; border-bottom: 1px solid #b8b8b8; display: flex; align-items: center; padding-left: 6px; font-size: 14px; }
.m1 { width: 34px; } .m2 { width: 36px; } .m3 { width: 45px; } .m4 { width: 42px; } .m5 { width: 44px; } .m6 { width: 57px; } .m7 { width: 61px; } .m8 { width: 61px; }
.bar { height: 35px; background: #d9d9d9; border-bottom: 1px solid #999; display: flex; align-items: center; }
.grip { width: 5px; height: 30px; margin: 0 4.500px 0 5px; border: solid #bbb; border-width: 0 1px; }
.g2 { margin: 0 0 0 5px; }
.t { width: 35px; height: 34px; flex: none; position: relative; display: flex; align-items: center; justify-content: center; }
.t svg, .o svg, .palette b svg { width: 20px; height: 20px; }
.bar .s { width: 9px; flex: none; height: 34px; background: linear-gradient(#b8b8b8, #b8b8b8) center / 1px 100% no-repeat; }
.dd::after { content: ""; position: absolute; right: 2px; bottom: 3px; border: solid transparent; border-width: 5px 3px 0; border-top-color: #555; }
.act { display: flex; align-items: center; gap: 3px; margin-left: 15px; font: bold 8.500px/7.500px "Noto Sans", sans-serif; color: #444; }
.a2 { margin-left: 18px; }
.opts { height: 41px; background: #eee; border-bottom: 1px solid #d8d8d8; display: flex; align-items: center; font-size: 13px; padding-top: 2px; }
.opts .grip { margin: 0 3px 0 8px; border-color: #c8c8c8; height: 32px; }
.o { width: 31px; height: 31px; margin: 0 1px; flex: none; border-radius: 2px; position: relative; display: flex; align-items: center; justify-content: center; }
.o.dd::after { right: -1px; bottom: 1px; }
.on { background: #d9d9d9; }
.opts .s { width: 9px; flex: none; height: 35px; background: linear-gradient(#c8c8c8, #c8c8c8) center / 1px 100% no-repeat; }
.opts label { flex: none; padding-left: 6px; }
.w51 { width: 52px; } .w54 { width: 54px; } .w61 { width: 61px; } .w65 { width: 65px; } .w48 { width: 48px; } .w59 { width: 59px; }
.combo { width: 111px; height: 26px; margin-right: 4px; flex: none; background: #fff; border: 1px solid #999; padding-left: 6px; display: flex; align-items: center; position: relative; }
.combo::after, .input::after { content: ""; position: absolute; right: 5px; top: 10px; border: solid transparent; border-width: 5px 3px 0; border-top-color: #555; }
.c168 { width: 169px; padding-left: 4px; } .c55 { width: 55px; } .c38 { width: 38px; }
.sw { width: 20px; height: 20px; background: #a00a0c; border: 1px solid #b42020; margin-right: 6px; }
main { height: 847px; display: flex; }
.palette { width: 70px; border-left: 1px solid #ccc; border-right: 2px solid #d0d0d0; display: grid; grid-template-columns: 33px 33px; grid-auto-rows: max-content; padding: 7px 0 0 0; }
.palette b { width: 33px; height: 33px; display: flex; align-items: center; justify-content: center; position: relative; }
.palette .on { background: linear-gradient(#d9d9d9, #d9d9d9) 3px 2px / 29px 29px no-repeat; }
.palette hr { grid-column: span 2; width: 66px; height: 2px; margin: 0; border: 0; background: linear-gradient(#c8c8c8, #c8c8c8) 1px 0 / 100% 1px no-repeat; }
.palette .dd::after { right: 2px; bottom: 3px; }
.hgrip { grid-column: span 2; height: 5px; width: 52px; margin: 0 0 4px 8px; border: solid #c4c4c4; border-width: 1px 0; }
.more { grid-column: span 2; margin: 39px 0 0 29px; }
.panel { width: 352px; }
.tabs { height: 30px; display: flex; align-items: center; padding: 0 0 2px 2px; font-size: 13.200px; color: #888; }
.tabs span { height: 28px; display: flex; align-items: center; justify-content: center; background: #d9d9d9; }
.tab1 { width: 108px; margin-right: 4px; } .tab2 { width: 71px; margin-right: 4px; }
.tabs .tab3 { width: 104px; height: 30px; background: none; border-bottom: 3px solid #0895d8; color: #0895d8; position: relative; top: 1px; padding-top: 2px; z-index: 1; }
.box { height: 817px; border: 1px solid #888c94; display: flex; flex-direction: column; }
h4 { font-weight: normal; font-size: 13.200px; margin: 0; display: flex; align-items: center; }
.h1 { height: 23px; padding-bottom: 6px; } .h2 { height: 29px; padding-bottom: 2px; }
.list { border: 1px solid #7f858f; background: #fff; display: flex; padding: 1px; overflow: hidden; flex: none; }
.l1 { height: 247px; } .l2 { height: 121px; } .l3 { height: 364px; margin-top: 4px; }
ul { list-style: none; margin: 0; padding: 0; flex: 1; overflow: hidden; }
.blue { background: #0895d8; color: #eef6fb; flex: none; width: 330px; }
.blue li { height: 21px; display: flex; align-items: center; padding-left: 3px; font-size: 13px; word-spacing: -1px; }
.blue svg { width: 16px; height: 16px; margin-right: 6px; }
.l2 li { height: 19px; line-height: 19px; padding-left: 4px; font-size: 13.200px; }
.l2 li:nth-child(even) { background: #f4f4f4; }
.sb { flex: 1; background: repeating-conic-gradient(#fff 0 25%, #e9e9e9 0 50%) 0 0 / 2px 2px; }
.sb i { display: block; background: #808080; border-radius: 3px; width: 6px; margin-left: 5px; box-shadow: 0 0 0 5px #eee; clip-path: inset(0 -5px); }
.th1 { height: 178px; } .th2 { height: 152px; margin-top: 27px; }
.c { width: 16px; height: 16px; background: #7095b8; border: 1px solid #82a8c8; margin-right: 6px; }
.via { background: #20a098; border-color: #28b0a0; } .unr { background: #6e965c; border-color: #7fa050; } .c.dim { background: #84946a; border-color: #989a60; }
.ht { background: repeating-linear-gradient(135deg, #002444 0 3px, #5088b0 3px 4px); }
.hbk { background: repeating-linear-gradient(45deg, #002444 0 3px, #5088b0 3px 4px); }
.ht.wide { background: repeating-linear-gradient(135deg, #002444 0 2.500px, #82b0d8 2.500px 4px); }
.hbk.wide { background: repeating-linear-gradient(45deg, #002444 0 2.500px, #82b0d8 2.500px 4px); }
.ht.grn { background: repeating-linear-gradient(135deg, #002444 0 3px, #6e965c 3px 4px); border-color: #6e965c; }
.hbk.grn { background: repeating-linear-gradient(45deg, #002444 0 3px, #6e965c 3px 4px); border-color: #6e965c; }
.reset { align-self: flex-end; width: 51px; height: 26px; margin-top: 2px; background: #fff; border: 1px solid #777; border-radius: 4px; font: 13.200px Roboto, sans-serif; color: #444; padding: 0; }
.work { flex: 1; border-left: 4px solid #d4d4d4; display: flex; flex-direction: column; }
.cmd { height: 34px; display: flex; align-items: center; padding-left: 7px; flex: none; }
.cmd span { width: 132px; font-size: 13px; }
.input { width: 1111px; height: 27px; margin-bottom: 0; background: #fff; border: 1px solid #0895d8; position: relative; padding: 4px 6px; }
.caret { display: block; width: 1px; height: 17px; background: #000; }
.view { display: flex; height: 797px; }
.canvas { width: 1238px; background: #282828; position: relative; }
.board { display: block; }
.side { position: absolute; right: 3px; top: 9px; display: flex; flex-direction: column; gap: 15.500px; }
.side div { width: 27px; height: 145.500px; background: #444; display: flex; flex-direction: column; align-items: center; padding-top: 18px; gap: 10px; color: #fff; }
.side div:first-child { padding-top: 7px; gap: 7px; }
.side svg { width: 17px; height: 17px; flex: none; }
.side span { writing-mode: vertical-rl; line-height: 16px; white-space: nowrap; font: 600 11.500px/16px "Noto Sans", sans-serif; letter-spacing: -.05px; }
.vs { width: 6px; margin-left: 5px; background: #808080; border-radius: 3px; }
.hs { display: block; width: 1238px; height: 6px; margin-top: 5px; background: #808080; border-radius: 3px; }
footer { height: 25px; border-top: 1px solid #888; display: flex; align-items: center; padding-left: 5px; font-size: 13px; }
footer span { flex: 1; }
footer b { width: 26px; height: 22px; border-left: 1px solid #ccc; display: flex; align-items: center; justify-content: center; }
footer svg { width: 20px; height: 20px; }
.ink { position: absolute; left: 0; top: 0; pointer-events: none; }
```
